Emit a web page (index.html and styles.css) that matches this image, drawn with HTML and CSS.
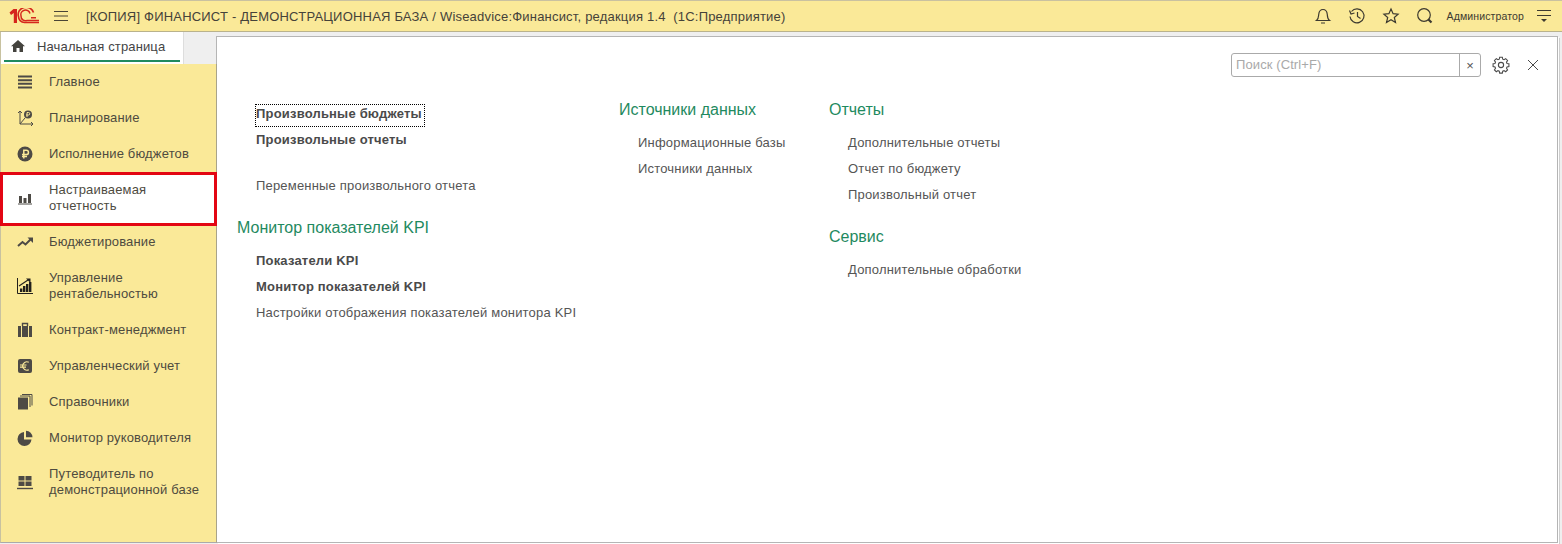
FILE: index.html
```html
<!DOCTYPE html>
<html lang="ru">
<head>
<meta charset="utf-8">
<title>1С</title>
<link rel="stylesheet" href="styles.css">
</head>
<body>
<header class="topbar">
  <svg class="logo" width="30" height="16" viewBox="0 0 30 16"><path d="M0.500 4.500L4.500 1H8V15H4.800V5L2 7z" fill="#d5261c"/><path d="M21 5.500A4.500 4.500 0 0 0 12 8a4.500 4.500 0 0 0 6 4.500H30" fill="none" stroke="#d5261c" stroke-width="1.500"/><path d="M24.500 4.500A7.500 7 0 0 0 9.500 8.500c0 3 2.500 6 6 6H30" fill="none" stroke="#d5261c" stroke-width="1.600"/><path d="M22 9h5v1.500h-5z" fill="#d5261c"/></svg>
  <svg class="burger" width="16" height="12" viewBox="0 0 16 12"><path d="M1 1.500h14M1 6h14M1 10.500h14" stroke="#4a4536" stroke-width="1"/></svg>
  <div class="title">[КОПИЯ] ФИНАНСИСТ - ДЕМОНСТРАЦИОННАЯ БАЗА / Wiseadvice:Финансист, редакция 1.4&nbsp; (1С:Предприятие)</div>
  <div class="tools">
    <svg width="18" height="18" viewBox="0 0 18 18"><path d="M2.500 13.500c2-1.500 2-3 2.200-6C5 4.500 6.500 2.500 9 2.500s4 2 4.300 5c.2 3 .2 4.500 2.200 6zM7 16h4" fill="none" stroke="#3d3a30" stroke-width="1.200"/></svg>
    <svg width="18" height="18" viewBox="0 0 18 18"><path d="M3.500 4.500A7 7 0 1 1 2 9.500M1.500 3.500l1.500 3.500 3.500-1M9.500 5v4.500l3 2" fill="none" stroke="#3d3a30" stroke-width="1.200"/></svg>
    <svg width="18" height="18" viewBox="0 0 18 18"><path d="M9 2l2.100 4.700 5 .5-3.800 3.300 1.200 5L9 12.800l-4.500 2.700 1.200-5L1.900 7.200l5-.5z" fill="none" stroke="#3d3a30" stroke-width="1.200"/></svg>
    <svg width="18" height="18" viewBox="0 0 18 18"><circle cx="8" cy="8" r="6.300" fill="none" stroke="#3d3a30" stroke-width="1.200"/><path d="M12.500 12.500l3 3" stroke="#3d3a30" stroke-width="2.200"/></svg>
    <span class="user">Администратор</span>
    <svg width="16" height="16" viewBox="0 0 16 16"><path d="M1 2.500h14M1 7.500h14" stroke="#3d3a30" stroke-width="1"/><path d="M5 11h6l-3 3z" fill="#3d3a30"/></svg>
  </div>
</header>
<div class="workspace">
  <aside class="side">
    <div class="tabrow">
      <div class="hometab">
        <div class="hometab-in">
          <svg width="14" height="12" viewBox="0 0 14 12"><path d="M7 0L0 6.200h2V12h3.500V8h3v4H12V6.200h2z" fill="#44433e"/></svg>
          <span>Начальная страница</span>
        </div>
      </div>
      <div class="tabrest"></div>
    </div>
    <nav class="menu">
      <a class="item"><svg class="ic" viewBox="0 0 16 16"><path d="M1 2.500h14M1 6.200h14M1 9.800h14M1 13.500h14" stroke="#4d4a45" stroke-width="2"/></svg><span>Главное</span></a>
      <a class="item"><svg class="ic" viewBox="0 0 16 16"><path d="M3 1v13h13M1 3l2-2 2 2M14 12l2 2-2 2M3 14l5-6" fill="none" stroke="#4d4a45" stroke-width="1"/><circle cx="11" cy="4.500" r="4" fill="#4d4a45"/><path d="M10 7V2.500h1.500a1.200 1.200 0 0 1 0 2.500H9" fill="none" stroke="#fae998" stroke-width="1"/></svg><span>Планирование</span></a>
      <a class="item"><svg class="ic" viewBox="0 0 16 16"><circle cx="8" cy="8" r="7.500" fill="#4d4a45"/><path d="M6.800 12.500V4.300h2.500a2.100 2.100 0 0 1 0 4.300H5M5 10.500h5" fill="none" stroke="#fae998" stroke-width="1.500"/></svg><span>Исполнение бюджетов</span></a>
      <a class="item two active"><svg class="ic" viewBox="0 0 16 16"><path d="M2 6h3v7H2zM6.500 8h3v5h-3zM11 4h3v9h-3z" fill="#4d4a45"/><path d="M1 14h14" stroke="#4d4a45"/></svg><span>Настраиваемая<br>отчетность</span></a>
      <a class="item"><svg class="ic" viewBox="0 0 16 16"><path d="M1 12l4.500-4 3 2.500L14 5" fill="none" stroke="#4d4a45" stroke-width="2"/><path d="M10.500 3.500H16V9z" fill="#4d4a45"/></svg><span>Бюджетирование</span></a>
      <a class="item two"><svg class="ic" viewBox="0 0 16 16"><path d="M.5 0v15.500H16" fill="none" stroke="#22201c"/><path d="M3 10.500h2.400V14H3zM6 8h2.400v6H6zM9 6h2.400v8H9zM12 4h2.400v10H12z" fill="#22201c"/><path d="M2 8l9-6" stroke="#22201c" stroke-width="1.200"/><path d="M9 .5h4.500V5z" fill="#22201c"/></svg><span>Управление<br>рентабельностью</span></a>
      <a class="item"><svg class="ic" viewBox="0 0 16 16"><path d="M1 4h14v11H1z" fill="#4d4a45"/><path d="M5.500 4V1.500h5V4" fill="none" stroke="#4d4a45" stroke-width="1.400"/><path d="M4.500 4v11M11.500 4v11" stroke="#fae998"/></svg><span>Контракт-менеджмент</span></a>
      <a class="item"><svg class="ic" viewBox="0 0 16 16"><rect x="1" y="1" width="14" height="14" rx="2" fill="#4d4a45"/><path d="M11.800 4.300a4.200 4.200 0 1 0 0 7.400M3 7h6.500M3 9.200h6" fill="none" stroke="#fae998" stroke-width="1.200"/></svg><span>Управленческий учет</span></a>
      <a class="item"><svg class="ic" viewBox="0 0 16 16"><path d="M1 3.500h10v12H1z" fill="#4d4a45"/><path d="M3 2h10v11M5 .5h10v11" fill="none" stroke="#4d4a45"/></svg><span>Справочники</span></a>
      <a class="item"><svg class="ic" viewBox="0 0 16 16"><path d="M7 2a7 7 0 1 0 7.500 7.500H7z" fill="#4d4a45"/><path d="M9 .8v6.500h6.500A6.500 6.500 0 0 0 9 .8z" fill="#4d4a45"/></svg><span>Монитор руководителя</span></a>
      <a class="item two"><svg class="ic" viewBox="0 0 16 16"><path d="M1.500 2h6v4.500h-6zM8.500 2h6v4.500h-6zM1.500 7.500h6V12h-6zM8.500 7.500h6V12h-6z" fill="#4d4a45"/><path d="M0 14.500h16" stroke="#4d4a45" stroke-width="1.400"/></svg><span>Путеводитель по<br>демонстрационной базе</span></a>
    </nav>
  </aside>
  <main class="panel">
    <div class="panel-tools">
      <div class="search"><span class="ph">Поиск (Ctrl+F)</span><span class="clr">×</span></div>
      <svg class="gear" width="18" height="18" viewBox="0 0 18 18"><circle cx="9" cy="9" r="2.600" fill="none" stroke="#4a4a4a" stroke-width="1.100"/><path d="M7.500 1.500h3l.4 2.100 1.500.6 1.800-1.200 2.100 2.100-1.200 1.800.6 1.500 2.100.4v3l-2.100.4-.6 1.500 1.200 1.800-2.100 2.100-1.800-1.200-1.500.6-.4 2.100h-3l-.4-2.100-1.500-.6-1.800 1.200-2.100-2.100 1.200-1.800-.6-1.500-2.100-.4v-3l2.100-.4.6-1.500-1.200-1.800 2.100-2.100 1.800 1.200 1.500-.6z" fill="none" stroke="#4a4a4a" stroke-width="1.200" transform="translate(.9 -.1) scale(.9)"/></svg>
      <svg class="close" width="12" height="12" viewBox="0 0 12 12"><path d="M1 1l10 10M11 1L1 11" stroke="#4a4a4a" stroke-width="1"/></svg>
    </div>
    <div class="cols">
      <section class="col col1">
        <a class="link bold focus">Произвольные бюджеты</a>
        <a class="link bold">Произвольные отчеты</a>
        <a class="link gap">Переменные произвольного отчета</a>
        <h2 class="head out">Монитор показателей KPI</h2>
        <a class="link bold">Показатели KPI</a>
        <a class="link bold">Монитор показателей KPI</a>
        <a class="link">Настройки отображения показателей монитора KPI</a>
      </section>
      <section class="col col2">
        <h2 class="head">Источники данных</h2>
        <a class="link">Информационные базы</a>
        <a class="link">Источники данных</a>
      </section>
      <section class="col col3">
        <h2 class="head">Отчеты</h2>
        <a class="link">Дополнительные отчеты</a>
        <a class="link">Отчет по бюджету</a>
        <a class="link">Произвольный отчет</a>
        <h2 class="head next">Сервис</h2>
        <a class="link">Дополнительные обработки</a>
      </section>
    </div>
  </main>
</div>
</body>
</html>
```
FILE: styles.css
```css
* { box-sizing: border-box; }
html, body { margin: 0; height: 544px; overflow: hidden; }
body { font-family: "Liberation Sans", Arial, sans-serif; font-size: 13px; color: #4b4b4b; background: #efefef; }
svg { display: block; flex: none; }
.topbar { height: 32px; display: flex; align-items: center; background: #fae998; border-top: 1px solid #c9c1a0; border-bottom: 1px solid #b9b28c; padding: 0 10px 0 9px; }
.burger { margin-left: 14px; }
.title { margin-left: 17px; font-size: 13px; letter-spacing: .2px; color: #45423a; white-space: nowrap; }
.tools { margin-left: auto; display: flex; align-items: center; gap: 16px; }
.user { font-size: 10.5px; letter-spacing: .13px; color: #3d3a30; margin: 0 -4px 0 -3px; }
.workspace { display: flex; height: 512px; }
.side { width: 217px; flex: none; display: flex; flex-direction: column; padding-bottom: 1px; }
.tabrow { display: flex; height: 32px; }
.tabrest { flex: 1; margin-top: 4px; border-right: 1px solid #b5b5b5; }
.hometab { width: 184px; background: #fff; padding: 0 3px; border-left: 1px solid #c8c2a0; border-right: 1px solid #ddd; }
.hometab-in { height: 30px; display: flex; align-items: center; gap: 12px; padding-left: 7px; border-bottom: 2px solid #1f8a5f; color: #444; letter-spacing: .14px; }
.menu { flex: 1; background: #fae998; border-right: 1px solid #a9a48a; border-left: 1px solid #c8c2a0; border-bottom: 1px solid #aaa; }
.item { display: flex; align-items: center; height: 36px; padding-left: 16px; gap: 16px; color: #4e4b3f; line-height: 16px; letter-spacing: .16px; }
.item.two { height: 52px; }
.item.two.active { height: 54px; margin: 0 -1px -2px; padding: 0 0 2px 14px; background: #fff; border: 3px solid #e30613; gap: 16px; }
.ic { width: 16px; height: 16px; }
.panel { flex: 1; margin: 4px 4px 1px 0; background: #fff; border: 1px solid #b5b5b5; border-left: 0; min-width: 0; box-shadow: 1px 1px 0 #fff, 2px 2px 0 #cfcfcf; }
.panel-tools { display: flex; align-items: center; justify-content: flex-end; height: 24px; margin-top: 16px; padding-right: 18px; }
.search { width: 250px; height: 24px; display: flex; border: 1px solid #aaa; border-radius: 3px; align-items: center; margin-right: 11px; }
.ph { flex: 1; padding: 0 0 2px 4px; color: #a9a9a9; letter-spacing: .1px; }
.clr { width: 21px; height: 22px; border-left: 1px solid #aaa; display: flex; align-items: center; justify-content: center; color: #555; }
.close { margin-left: 17px; }
.cols { display: flex; padding-top: 17px; }
.col { display: flex; flex-direction: column; }
.col1 { width: 402px; padding: 7px 0 0 20px; }
.col2 { width: 210px; }
.col3 { width: 240px; }
.link { display: block; height: 26px; line-height: 26px; padding-left: 19px; white-space: nowrap; letter-spacing: .19px; color: #555; }
.bold { font-weight: 700; color: #4a4a4a; }
.focus { position: relative; }
.focus::before { content: ""; position: absolute; left: 18px; top: 3px; width: 168px; height: 21px; border: 1px dotted #000; }
.gap { margin-top: 20px; }
.head { margin: 0 0 4px; height: 32px; line-height: 32px; font-size: 16px; font-weight: 400; color: #1f8a5f; white-space: nowrap; }
.out { margin-top: 13px; }
.next { margin-top: 13px; }
```
